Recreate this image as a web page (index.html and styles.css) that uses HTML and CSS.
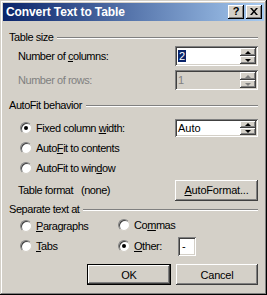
FILE: index.html
```html
<!DOCTYPE html>
<html>
<head>
    <link rel="stylesheet" href="styles.css">
</head>
<body>
    <div class="window">
        <div class="titlebar">
            <span class="title">Convert Text to Table</span>
            <div class="caption-buttons">
                <span class="cap-btn">?</span>
                <span class="cap-btn cap-close">
                    <svg width="8" height="7" viewBox="0 0 8 7">
                        <path d="M0 0h2l2 2.5L6 0h2L5 3.5 8 7H6L4 4.5 2 7H0l3-3.5z" fill="#000"/>
                    </svg>
                </span>
            </div>
        </div>

        <div class="content">
            <div class="group-head"><span>Table size</span><div class="etch"></div></div>

            <div class="row row-spin">
                <span class="label">Number of <u>c</u>olumns:</span>
                <div class="spin">
                    <div class="field"><span class="selected">2</span></div>
                    <div class="arrows">
                        <div class="arrow"><i class="up"></i></div>
                        <div class="arrow"><i class="down"></i></div>
                    </div>
                </div>
            </div>

            <div class="row row-spin disabled">
                <span class="label">Number of rows:</span>
                <div class="spin">
                    <div class="field">1</div>
                    <div class="arrows">
                        <div class="arrow"><i class="up"></i></div>
                        <div class="arrow"><i class="down"></i></div>
                    </div>
                </div>
            </div>

            <div class="group-head"><span>AutoFit behavior</span><div class="etch"></div></div>

            <div class="radio-list">
                <div class="row row-radio">
                    <label class="radio"><span class="dot checked"></span><span>Fixed column <u>w</u>idth:</span></label>
                    <div class="spin spin-short">
                        <div class="field">Auto</div>
                        <div class="arrows">
                            <div class="arrow"><i class="up"></i></div>
                            <div class="arrow"><i class="down"></i></div>
                        </div>
                    </div>
                </div>
                <div class="row row-radio">
                    <label class="radio"><span class="dot"></span><span>Auto<u>F</u>it to contents</span></label>
                </div>
                <div class="row row-radio">
                    <label class="radio"><span class="dot"></span><span>AutoFit to win<u>d</u>ow</span></label>
                </div>
            </div>

            <div class="row row-format">
                <span class="label">Table format&nbsp;&nbsp;&nbsp;(none)</span>
                <div class="button btn-wide"><span><u>A</u>utoFormat...</span></div>
            </div>

            <div class="group-head group-tight"><span>Separate text at</span><div class="etch"></div></div>

            <div class="sep-grid">
                <label class="radio r1"><span class="dot"></span><span><u>P</u>aragraphs</span></label>
                <label class="radio r2"><span class="dot"></span><span>Co<u>m</u>mas</span></label>
                <label class="radio r3"><span class="dot"></span><span><u>T</u>abs</span></label>
                <div class="other">
                    <label class="radio"><span class="dot checked"></span><span><u>O</u>ther:</span></label>
                    <div class="small-field">-</div>
                </div>
            </div>

            <div class="footer">
                <div class="button btn-default">OK</div>
                <div class="button">Cancel</div>
            </div>
        </div>
    </div>
</body>
</html>
```

FILE: styles.css
```css
/* classic dialog look */

body {
    margin: 0;
    background: #d4d0c8;
}

.window {
    box-sizing: border-box;
    width: 267px;
    height: 295px;
    padding: 3px;
    background: #d4d0c8;
    box-shadow: inset -1px -1px 0 #000, inset 1px 1px 0 #d4d0c8,
                inset -2px -2px 0 #808080, inset 2px 2px 0 #fff;
    font-family: "Liberation Sans", Arial, sans-serif;
    font-size: 11px;
    letter-spacing: -0.45px;
    color: #000;
}

.titlebar {
    height: 18px;
    display: flex;
    align-items: center;
    justify-content: space-between;
    padding: 0 2px 0 3px;
    background: linear-gradient(to right, #0a246a, #a6caf0);
}

.title {
    color: #fff;
    font-weight: bold;
    font-size: 12px;
    letter-spacing: -0.1px;
}

.caption-buttons {
    display: flex;
    gap: 2px;
}

.cap-btn {
    box-sizing: border-box;
    width: 16px;
    height: 14px;
    display: flex;
    align-items: center;
    justify-content: center;
    background: #d4d0c8;
    box-shadow: inset -1px -1px 0 #000, inset 1px 1px 0 #fff, inset -2px -2px 0 #808080;
    font-weight: bold;
    font-size: 11px;
    letter-spacing: 0;
    line-height: 1;
    padding-bottom: 1px;
}

.content {
    padding: 3px 6px 0 6px;
}

.group-head {
    display: flex;
    align-items: center;
    height: 14px;
    margin-top: 6px;
    gap: 4px;
}

.group-tight {
    margin-top: 0;
}

.etch {
    flex: 1;
    height: 0;
    border-top: 1px solid #808080;
    border-bottom: 1px solid #fff;
    margin-top: 1px;
}

.row {
    display: flex;
    align-items: center;
    justify-content: space-between;
    padding-left: 9px;
}

.row-spin {
    height: 24px;
}

.radio-list {
    padding-top: 6px;
}

.row-radio {
    height: 20px;
    padding-left: 11px;
}

.disabled {
    color: #808080;
}

.spin {
    box-sizing: border-box;
    width: 83px;
    height: 20px;
    display: flex;
    background: #fff;
    padding: 2px;
    box-shadow: inset 1px 1px 0 #808080, inset -1px -1px 0 #fff,
                inset 2px 2px 0 #404040, inset -2px -2px 0 #d4d0c8;
}

.spin-short {
    height: 18px;
}

.disabled .spin {
    background: #d4d0c8;
}

.field {
    flex: 1;
    display: flex;
    align-items: center;
    padding-left: 1px;
    letter-spacing: 0;
}

.selected {
    background: #0a246a;
    color: #fff;
    padding: 0 1px;
}

.arrows {
    width: 16px;
    display: flex;
    flex-direction: column;
}

.arrow {
    flex: 1;
    display: flex;
    align-items: center;
    justify-content: center;
    background: #d4d0c8;
    box-shadow: inset -1px -1px 0 #404040, inset 1px 1px 0 #fff, inset -2px -2px 0 #808080;
}

.arrow i {
    width: 0;
    height: 0;
    border-left: 3px solid transparent;
    border-right: 3px solid transparent;
}

.arrow .up {
    border-bottom: 3px solid #000;
}

.arrow .down {
    border-top: 3px solid #000;
}

.disabled .arrow .up {
    border-bottom-color: #808080;
}

.disabled .arrow .down {
    border-top-color: #808080;
}

.radio {
    display: flex;
    align-items: center;
    gap: 4px;
}

.dot {
    box-sizing: border-box;
    width: 12px;
    height: 12px;
    border-radius: 50%;
    background: #fff;
    border: 1px solid;
    border-color: #808080 #d4d0c8 #d4d0c8 #808080;
    box-shadow: inset 1px 1px 0 #404040;
    display: flex;
    align-items: center;
    justify-content: center;
}

.dot.checked::after {
    content: "";
    width: 4px;
    height: 4px;
    border-radius: 50%;
    background: #000;
}

.row-format {
    height: 24px;
}

.button {
    box-sizing: border-box;
    height: 21px;
    display: flex;
    align-items: center;
    justify-content: center;
    background: #d4d0c8;
    box-shadow: inset -1px -1px 0 #404040, inset 1px 1px 0 #fff, inset -2px -2px 0 #808080;
    letter-spacing: -0.2px;
}

.btn-wide {
    width: 83px;
}

.btn-default {
    width: 84px;
    box-shadow: inset 0 0 0 1px #000, inset -2px -2px 0 #404040, inset 2px 2px 0 #fff,
                inset -3px -3px 0 #808080;
}

.sep-grid {
    display: grid;
    grid-template-columns: 98px 1fr;
    grid-template-rows: 20px 20px;
    padding-left: 11px;
}

.r2 {
    margin-top: -2px;
}

.other {
    display: flex;
    align-items: center;
    gap: 16px;
}

.small-field {
    box-sizing: border-box;
    width: 18px;
    height: 19px;
    display: flex;
    align-items: center;
    padding-left: 4px;
    background: #fff;
    box-shadow: inset 1px 1px 0 #808080, inset -1px -1px 0 #fff,
                inset 2px 2px 0 #404040, inset -2px -2px 0 #d4d0c8;
}

.footer {
    display: flex;
    justify-content: flex-end;
    gap: 5px;
    margin-top: 8px;
}

.footer .button {
    width: 82px;
}

.footer .btn-default {
    width: 84px;
}
```
